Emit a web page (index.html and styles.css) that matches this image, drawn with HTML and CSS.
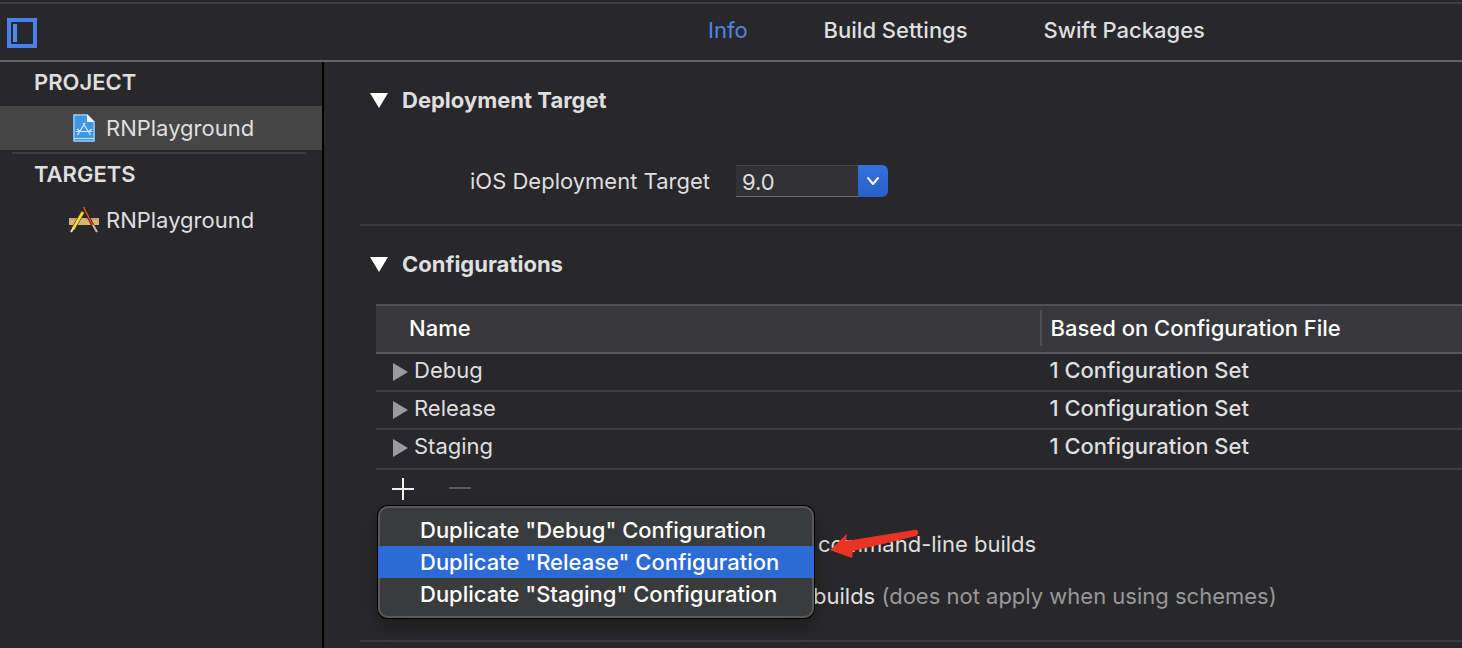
FILE: index.html
```
<!DOCTYPE html>
<html lang="en">

<head>
    <meta charset="UTF-8">
    <meta name="viewport" content="width=device-width, initial-scale=1.0">
    <title>RNPlayground</title>
    <link rel="stylesheet" href="styles.css">
</head>

<body>
    <header class="topbar">
        <button class="panel-toggle" aria-label="Toggle sidebar">
            <svg width="30" height="30" viewBox="0 0 30 30">
                <rect x="2" y="2" width="26" height="26" fill="#1d2a44" stroke="#4b80e6" stroke-width="4"/>
                <rect x="12" y="5" width="13" height="20" fill="#28282a"/>
                <rect x="6" y="6" width="4" height="18" fill="#5b86dc"/>
            </svg>
        </button>
        <nav class="tabs">
            <a href="#info" class="active">Info</a>
            <a href="#build">Build Settings</a>
            <a href="#packages">Swift Packages</a>
        </nav>
    </header>

    <div class="layout">
        <aside class="sidebar">
            <h2>PROJECT</h2>
            <a href="#project" class="item selected">
                <svg width="30" height="30" viewBox="0 0 30 30">
                    <path d="M4 1h14l8 8v20H4z" fill="#3f97e4"/>
                    <path d="M5 2h12.500l7.500 7.500V28H5z" fill="none" stroke="#b9ddfa"/>
                    <path d="M18 1v8h8z" fill="#f2f8fd"/>
                    <path d="M5 25.500h20" stroke="#c8e4fb"/>
                    <path d="M16 10L8.500 22M14 10l7.500 12M7 18.500h16M11 18l-3-2M20 18l3-2" fill="none" stroke="#d4eafc" stroke-width="1.200"/>
                </svg>
                <span>RNPlayground</span>
            </a>
            <hr>
            <h2>TARGETS</h2>
            <a href="#target" class="item">
                <svg width="30" height="30" viewBox="0 0 30 30">
                    <rect y="13" width="30" height="7" fill="#dcb27c"/>
                    <path d="M3 13v2M6 13v2M9 13v2M18 13v2M21 13v2M24 13v2M27 13v2" stroke="#a67c4b"/>
                    <path d="M14 7L4 24" stroke="#5e4510" stroke-width="4"/>
                    <path d="M14 7L4 24" stroke="#f7dc3c" stroke-width="2.500"/>
                    <path d="M4.500 23L2 27" stroke="#f3dfb8" stroke-width="2"/>
                    <path d="M14.500 2L24 21" stroke="#4c1a0d" stroke-width="3"/>
                    <path d="M14.500 2L24 21" stroke="#c9552c" stroke-width="1.500"/>
                    <path d="M24 20l4 7" stroke="#d6b8b0" stroke-width="2"/>
                </svg>
                <span>RNPlayground</span>
            </a>
        </aside>

        <main class="content">
            <section class="deployment">
                <h3><span class="arrow-down"></span>Deployment Target</h3>
                <div class="field">
                    <label for="ios-target">iOS Deployment Target</label>
                    <div class="combo">
                        <input type="text" id="ios-target" value="9.0">
                        <button aria-label="Show versions">
                            <svg width="14" height="10" viewBox="0 0 14 10">
                                <path d="M2 2l5 6l5-6" fill="none" stroke="#fff" stroke-width="2" stroke-linecap="round" stroke-linejoin="round"/>
                            </svg>
                        </button>
                    </div>
                </div>
            </section>

            <section class="configurations">
                <h3><span class="arrow-down"></span>Configurations</h3>
                <table>
                    <thead>
                        <tr>
                            <th class="name">Name</th>
                            <th><span>Based on Configuration File</span></th>
                        </tr>
                    </thead>
                    <tbody>
                        <tr>
                            <td><span class="arrow-right"></span>Debug</td>
                            <td>1 Configuration Set</td>
                        </tr>
                        <tr>
                            <td><span class="arrow-right"></span>Release</td>
                            <td>1 Configuration Set</td>
                        </tr>
                        <tr>
                            <td><span class="arrow-right"></span>Staging</td>
                            <td>1 Configuration Set</td>
                        </tr>
                    </tbody>
                </table>

                <div class="actions">
                    <button aria-label="Add configuration">
                        <svg width="22" height="22" viewBox="0 0 22 22">
                            <path d="M11 0v22M0 11h22" stroke="#f0f0f0" stroke-width="2"/>
                        </svg>
                    </button>
                    <button aria-label="Remove configuration" disabled>
                        <svg width="22" height="22" viewBox="0 0 22 22">
                            <path d="M0 10h22" stroke="#5c5c5e" stroke-width="2"/>
                        </svg>
                    </button>

                    <div class="menu">
                        <button>Duplicate "Debug" Configuration</button>
                        <button class="highlighted">Duplicate "Release" Configuration</button>
                        <button>Duplicate "Staging" Configuration</button>
                    </div>
                    <svg class="pointer" width="92" height="32" viewBox="0 0 92 32">
                        <path d="M2 21L19 5L18 12L86 1Q91 0 90 5L88 7L25 22L24 29Z" fill="#e93323"/>
                    </svg>
                </div>

                <div class="options">
                    <p class="command-line">command-line builds</p>
                    <p>builds <span class="note">(does not apply when using schemes)</span></p>
                </div>
            </section>
        </main>
    </div>
</body>

</html>
```
FILE: styles.css
```
* {
    box-sizing: border-box;
}

body {
    margin: 0;
    min-height: 100vh;
    display: flex;
    flex-direction: column;
    background-color: #28282a;
    color: #dfdfe0;
    font-family: Inter, "Liberation Sans", sans-serif;
    font-size: 22px;
    line-height: 32px;
}

a {
    color: inherit;
    text-decoration: none;
}

button {
    padding: 0;
    border: none;
    background: none;
    color: inherit;
    font: inherit;
}

svg {
    display: block;
}

/* top bar */
.topbar {
    display: flex;
    align-items: center;
    height: 60px;
    margin-top: 2px;
    border-top: 2px solid #404042;
    border-bottom: 2px solid #636365;
}

.panel-toggle {
    margin-left: 7px;
    padding-top: 2px;
}

.tabs {
    display: flex;
    gap: 76px;
    margin-left: 671px;
    padding-bottom: 4px;
    font-weight: 500;
    white-space: nowrap;
}

.tabs .active {
    color: #5386e0;
    font-weight: 400;
}

.layout {
    display: flex;
    flex: 1;
}

/* sidebar */
.sidebar {
    width: 324px;
    flex-shrink: 0;
    border-right: 2px solid #000;
}

.sidebar h2 {
    margin: 0;
    padding: 4px 0 8px 34px;
    font-size: 22px;
    font-weight: 600;
}

.item {
    display: flex;
    align-items: center;
    gap: 7px;
    height: 44px;
    padding-left: 69px;
}

.item.selected {
    background-color: #464646;
}

.sidebar hr {
    height: 2px;
    margin: 2px 16px 0 12px;
    border: none;
    background-color: #3c3c3e;
}

/* main */
.content {
    flex: 1;
    min-width: 0;
    padding-left: 36px;
}

section {
    border-bottom: 2px solid #3a3a3c;
}

h3 {
    display: flex;
    align-items: center;
    gap: 14px;
    margin: 0;
    padding: 22px 0 0 10px;
    font-size: 22px;
    font-weight: 700;
}

.arrow-down {
    border: 9px solid transparent;
    border-top: 15px solid #fff;
    border-bottom: none;
}

.field {
    display: flex;
    align-items: center;
    gap: 26px;
    padding: 49px 0 27px 110px;
}

.combo {
    display: flex;
    width: 152px;
    height: 32px;
}

.combo input {
    flex: 1;
    min-width: 0;
    padding: 1px 6px 0;
    border: none;
    border-top: 1px solid #444446;
    border-bottom: 1px solid #6a6a6c;
    background-color: #323234;
    color: inherit;
    font: inherit;
}

.combo button {
    display: flex;
    align-items: center;
    justify-content: center;
    width: 30px;
    border-radius: 0 6px 6px 0;
    background: linear-gradient(#3470e2, #2860c8);
}

table {
    width: calc(100% - 16px);
    margin: 24px 0 0 16px;
    border-collapse: separate;
    border-spacing: 0;
    table-layout: fixed;
    text-align: left;
}

th {
    padding: 4px 0 6px 2px;
    border-top: 2px solid #505052;
    border-bottom: 2px solid #58585a;
    background-color: #38373b;
    color: #fff;
    font-weight: 500;
}

th.name {
    width: 61%;
    padding-left: 33px;
}

th span {
    display: block;
    padding: 2px 0 2px 8px;
    border-left: 2px solid #505054;
}

td {
    padding: 0 0 4px 11px;
    border-bottom: 2px solid #3c3c3e;
    font-weight: 500;
}

td:first-child {
    padding-left: 17px;
    font-weight: 400;
}

tr:last-child td {
    padding-bottom: 6px;
}

.arrow-right {
    display: inline-block;
    margin-right: 6px;
    border: 9px solid transparent;
    border-left: 15px solid #9b9b9d;
    border-right: none;
    vertical-align: -3px;
}

.actions {
    position: relative;
    display: flex;
    gap: 35px;
    padding: 8px 0 0 32px;
}

/* popup menu over the options */
.menu {
    position: absolute;
    top: 36px;
    left: 18px;
    width: 436px;
    padding: 8px 0;
    border-radius: 10px;
    background-color: #3a3b3d;
    box-shadow: inset 0 0 0 2px #58595b, 0 0 0 1px #000, 0 8px 20px rgba(0, 0, 0, 0.3);
    color: #fff;
    font-weight: 500;
}

.menu button {
    display: block;
    width: 100%;
    padding-left: 42px;
    text-align: left;
}

.menu .highlighted {
    background-color: #2c6bd6;
}

.pointer {
    position: absolute;
    top: 59px;
    left: 468px;
}

.options {
    padding: 28px 0 28px 453px;
}

.options p {
    margin: 0 0 20px;
}

.options p:last-child {
    margin: 0;
}

.options .command-line {
    padding-left: 5px;
}

.note {
    color: #98989a;
}
```
